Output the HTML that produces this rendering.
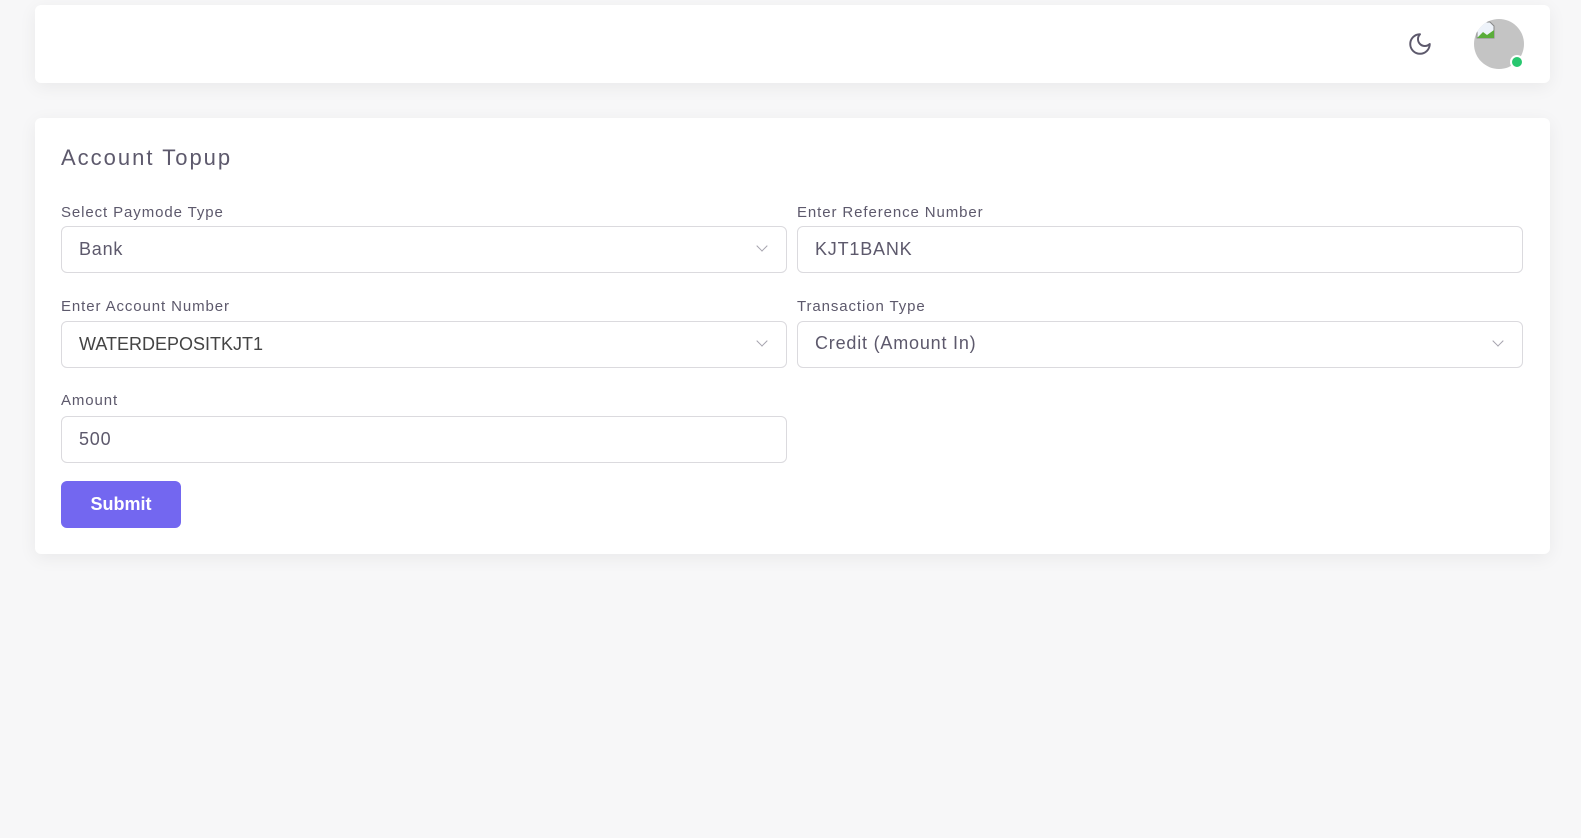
<!DOCTYPE html>
<html><head><style>
*{box-sizing:border-box;margin:0;padding:0}
body{width:1581px;height:838px;background:#f7f7f8;font-family:"Liberation Sans",sans-serif;position:relative;overflow:hidden}
.card{position:absolute;background:#fff;border-radius:6px;box-shadow:0 4px 18px rgba(0,0,0,.06)}
.lbl{position:absolute;font-size:15px;color:#5d596c;letter-spacing:.9px}
.inp{position:absolute;width:726px;height:47px;border:1px solid #dbdade;border-radius:6px;font-size:18px;color:#5d596c;padding:12px 0 0 17px;letter-spacing:.8px}
.chev{position:absolute;right:20px;top:15px;width:8px;height:8px;border-right:1px solid #a5a3ae;border-bottom:1px solid #a5a3ae;transform:rotate(45deg)}
</style></head><body>
<div class="card" style="left:35px;top:5px;width:1515px;height:78px">
<svg style="position:absolute;left:1372px;top:26px" width="26" height="26" viewBox="0 0 24 24" fill="none" stroke="#5d596c" stroke-width="1.8" stroke-linecap="round" stroke-linejoin="round"><path d="M12 3a6 6 0 0 0 9 9 9 9 0 1 1-9-9Z"/></svg>
<div style="position:absolute;left:1439px;top:14px;width:50px;height:50px;border-radius:50%;background:#c4c4c4;overflow:hidden">
<svg style="position:absolute;left:2px;top:2px" width="20" height="18" viewBox="0 0 20 18"><path d="M1 1h13l4 4v12H1z" fill="#eef3fa" stroke="#888" stroke-width="1"/><path d="M1 17l6-6 4 3 7-5v8z" fill="#5aad3a"/></svg>
</div>
<div style="position:absolute;left:1475px;top:50px;width:14px;height:14px;border-radius:50%;background:#28c76f;border:2px solid #fff"></div>
</div>
<div class="card" style="left:35px;top:118px;width:1515px;height:436px">
<div style="position:absolute;left:26px;top:27px;font-size:22px;color:#5d596c;letter-spacing:2px">Account Topup</div>
<div class="lbl" style="left:26px;top:86px">Select Paymode Type</div>
<div class="inp" style="left:26px;top:108px">Bank<div class="chev"></div></div>
<div class="lbl" style="left:762px;top:86px">Enter Reference Number</div>
<div class="inp" style="left:762px;top:108px">KJT1BANK</div>
<div class="lbl" style="left:26px;top:180px">Enter Account Number</div>
<div class="inp" style="left:26px;top:203px;color:#444;letter-spacing:0">WATERDEPOSITKJT1<div class="chev"></div></div>
<div class="lbl" style="left:762px;top:180px">Transaction Type</div>
<div class="inp" style="left:762px;top:203px;padding-top:11px">Credit (Amount In)<div class="chev"></div></div>
<div class="lbl" style="left:26px;top:274px">Amount</div>
<div class="inp" style="left:26px;top:298px">500</div>
<div style="position:absolute;left:26px;top:363px;width:120px;height:47px;background:#7367f0;border-radius:6px;color:#fff;font-size:18px;font-weight:bold;text-align:center;line-height:47px">Submit</div>
</div>
</body></html>
